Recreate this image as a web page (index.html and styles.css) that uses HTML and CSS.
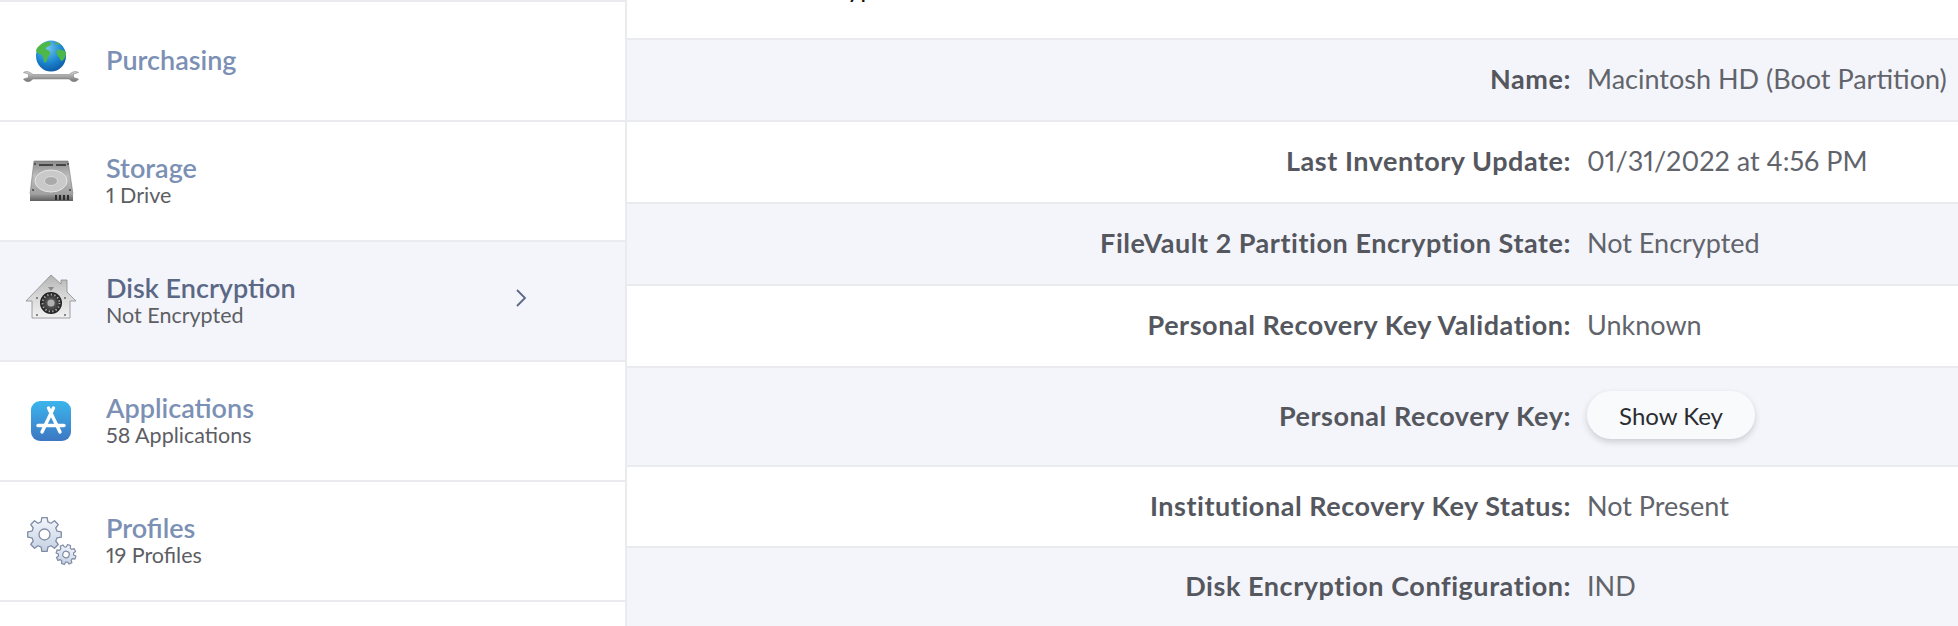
FILE: index.html
```html
<!DOCTYPE html>
<html lang="en">
<head>
    <meta charset="utf-8">
    <title>Disk Encryption</title>
    <link rel="stylesheet" href="styles.css">
</head>
<body>
    <div class="sidebar">
        <div class="item">
            <svg class="item-icon" viewBox="0 0 64 64">
                <defs>
                    <radialGradient id="sea" cx="0.4" cy="0.25" r="0.85">
                        <stop offset="0" stop-color="#6fc3ee"/>
                        <stop offset="0.55" stop-color="#1c86cf"/>
                        <stop offset="1" stop-color="#0c4f9c"/>
                    </radialGradient>
                    <linearGradient id="steel" x1="0" y1="0" x2="0" y2="1">
                        <stop offset="0" stop-color="#d9d9d9"/>
                        <stop offset="0.5" stop-color="#a3a3a3"/>
                        <stop offset="1" stop-color="#777"/>
                    </linearGradient>
                </defs>
                <ellipse cx="32" cy="27" rx="15" ry="15.5" fill="url(#sea)"/>
                <path d="M20 17c3-3 8-5 11-4 2 1 1 3-1 4-2 0-2 2-4 2 1 2 4 2 5 4s-1 3-2 5c-1 3-2 6-3 6-2-2-1-6-3-8-2-1-5-2-6-4 0-2 1-3 3-5z" fill="#4db848"/>
                <path d="M38 21c3-1 6 0 9 2 0 3-1 7-4 9-2 0-2-3-3-4-2-1-3-5-2-7z" fill="#4db848"/>
                <path d="M36 14c2-1 4 0 5 1-1 1-4 1-5-1z" fill="#5cb04a"/>
                <path d="M14 45.500H50C52 44 53 43 56 42.500C57.500 42.500 59 43 59.500 43.500L54.500 45V48.500L59.500 50C58.500 52 56 53 53.500 52.500C52 52 51 50.500 50 50H14C13 50.500 12 52 10.500 52.500C8 53 5.500 52 4.500 50L9.500 48.500V45L4.500 43.500C5 43 6.500 42.500 8 42.500C11 43 12 44 14 45.500Z" fill="url(#steel)" stroke="#777" stroke-width="0.5"/>
            </svg>
            <div class="item-text">
                <div class="item-title">Purchasing</div>
            </div>
        </div>
        <div class="item">
            <svg class="item-icon" viewBox="0 0 64 64">
                <defs>
                    <linearGradient id="drive" x1="0" y1="0" x2="0" y2="1">
                        <stop offset="0" stop-color="#8b8b8b"/>
                        <stop offset="0.45" stop-color="#bdbdbd"/>
                        <stop offset="1" stop-color="#a0a0a0"/>
                    </linearGradient>
                    <linearGradient id="driveFront" x1="0" y1="0" x2="0" y2="1">
                        <stop offset="0" stop-color="#a8a8a8"/>
                        <stop offset="1" stop-color="#5e5e5e"/>
                    </linearGradient>
                </defs>
                <path d="M15 12h34l5 33H11z" fill="url(#drive)" stroke="#777" stroke-width="0.6"/>
                <path d="M11 44h43v8H11z" fill="url(#driveFront)"/>
                <ellipse cx="32" cy="32" rx="16" ry="11" fill="#c9c9c9" stroke="#e6e6e6"/>
                <ellipse cx="32" cy="32" rx="6.5" ry="4.5" fill="#aaa" stroke="#dcdcdc"/>
                <path d="M20 15h14v2H20zM37 15h10v2H37z" fill="#444"/>
                <path d="M40 46h2v5h-2zM44 46h2v5h-2zM48 46h2v5h-2zM36 46h2v5h-2z" fill="#2c2c2c"/>
                <circle cx="16" cy="15" r="1" fill="#444"/>
                <circle cx="49" cy="15" r="1" fill="#444"/>
                <circle cx="14" cy="41" r="1" fill="#444"/>
                <circle cx="51" cy="41" r="1" fill="#444"/>
            </svg>
            <div class="item-text">
                <div class="item-title">Storage</div>
                <div class="item-sub">1 Drive</div>
            </div>
        </div>
        <div class="item item-active">
            <svg class="item-icon" viewBox="0 0 64 64">
                <defs>
                    <linearGradient id="roof" x1="0" y1="0" x2="0" y2="1">
                        <stop offset="0" stop-color="#b4b4b4"/>
                        <stop offset="0.5" stop-color="#d8d8d8"/>
                        <stop offset="1" stop-color="#f1f1f1"/>
                    </linearGradient>
                    <radialGradient id="dial" cx="0.5" cy="0.5" r="0.5">
                        <stop offset="0" stop-color="#a5a5a5"/>
                        <stop offset="0.35" stop-color="#555"/>
                        <stop offset="1" stop-color="#1f1f1f"/>
                    </radialGradient>
                </defs>
                <path d="M32 6l10 9v-4h6v12l9 9h-6v17H13V32H7z" fill="url(#roof)" stroke="#8a8a8a" stroke-width="0.8" stroke-linejoin="round"/>
                <path d="M29 18h6l-3 4z" fill="#888"/>
                <circle cx="32" cy="34" r="11" fill="url(#dial)"/>
                <circle cx="32" cy="34" r="8.500" fill="none" stroke="#b5b5b5" stroke-width="1.8" stroke-dasharray="1.2 2.4"/>
                <circle cx="32" cy="34" r="3.600" fill="#b0b0b0"/>
                <circle cx="18" cy="29" r="1" fill="#666"/>
                <circle cx="46" cy="29" r="1" fill="#666"/>
                <circle cx="18" cy="46" r="1" fill="#666"/>
                <circle cx="46" cy="46" r="1" fill="#666"/>
            </svg>
            <div class="item-text">
                <div class="item-title">Disk Encryption</div>
                <div class="item-sub">Not Encrypted</div>
            </div>
            <svg class="chevron" viewBox="0 0 12 20">
                <path d="M2 2l8 8-8 8" fill="none" stroke="#5b6885" stroke-width="1.8"/>
            </svg>
        </div>
        <div class="item">
            <svg class="item-icon" viewBox="0 0 64 64">
                <defs>
                    <linearGradient id="appstore" x1="0" y1="0" x2="0" y2="1">
                        <stop offset="0" stop-color="#3bb5ec"/>
                        <stop offset="1" stop-color="#3d77c2"/>
                    </linearGradient>
                </defs>
                <rect x="12" y="12" width="40" height="40" rx="9" fill="url(#appstore)"/>
                <path d="M29.500 19L41 43M34.500 19L23 43" fill="none" stroke="#fff" stroke-width="3.400" stroke-linecap="round"/>
                <path d="M19 36.500h26" fill="none" stroke="#fff" stroke-width="3.400" stroke-linecap="round"/>
            </svg>
            <div class="item-text">
                <div class="item-title">Applications</div>
                <div class="item-sub">58 Applications</div>
            </div>
        </div>
        <div class="item">
            <svg class="item-icon" viewBox="0 0 64 64">
                <defs>
                    <linearGradient id="gearFill" x1="0" y1="0" x2="0" y2="1">
                        <stop offset="0" stop-color="#f3f6fb"/>
                        <stop offset="1" stop-color="#c4d0e3"/>
                    </linearGradient>
                    <path id="gear" d="M12.56-3.360L16.790-2.660V2.660L12.560 3.360L11.260 6.500L13.750 9.990L9.990 13.750L6.500 11.260L3.360 12.560L2.660 16.790H-2.660L-3.360 12.560L-6.500 11.260L-9.990 13.750L-13.750 9.990L-11.260 6.500L-12.560 3.360L-16.790 2.660V-2.660L-12.560-3.360L-11.260-6.500L-13.750-9.990L-9.990-13.750L-6.500-11.260L-3.360-12.560L-2.660-16.790H2.660L3.360-12.560L6.500-11.260L9.990-13.750L13.750-9.990L11.260-6.500Z"/>
                </defs>
                <g transform="translate(25.500 25.500)" fill="url(#gearFill)" stroke="#7f8ca6" stroke-width="1.300" stroke-linejoin="round">
                    <use href="#gear"/>
                    <circle r="5.500" fill="#fff"/>
                </g>
                <g transform="translate(47 45.500) rotate(18) scale(0.59)" fill="url(#gearFill)" stroke="#7f8ca6" stroke-width="2" stroke-linejoin="round">
                    <use href="#gear"/>
                    <circle r="5.500" fill="#fff"/>
                </g>
            </svg>
            <div class="item-text">
                <div class="item-title">Profiles</div>
                <div class="item-sub">19 Profiles</div>
            </div>
        </div>
        <div class="item item-end"></div>
    </div>
    <div class="details">
        <div class="details-top">
            <div class="details-heading">Disk Encryption</div>
        </div>
        <div class="row row-alt">
            <div class="row-label">Name:</div>
            <div class="row-value">Macintosh HD (Boot Partition)</div>
        </div>
        <div class="row">
            <div class="row-label">Last Inventory Update:</div>
            <div class="row-value">01/31/2022 at 4:56 PM</div>
        </div>
        <div class="row row-alt">
            <div class="row-label">FileVault 2 Partition Encryption State:</div>
            <div class="row-value">Not Encrypted</div>
        </div>
        <div class="row">
            <div class="row-label">Personal Recovery Key Validation:</div>
            <div class="row-value">Unknown</div>
        </div>
        <div class="row row-alt row-tall">
            <div class="row-label">Personal Recovery Key:</div>
            <div class="row-value"><button class="show-key">Show Key</button></div>
        </div>
        <div class="row row-short">
            <div class="row-label">Institutional Recovery Key Status:</div>
            <div class="row-value">Not Present</div>
        </div>
        <div class="row row-alt row-end">
            <div class="row-label">Disk Encryption Configuration:</div>
            <div class="row-value">IND</div>
        </div>
    </div>
</body>
</html>
```

FILE: styles.css
```css
body {
    margin: 0;
    height: 100vh;
    display: flex;
    overflow: hidden;
    background-color: white;
    font-family: Lato, "Open Sans", sans-serif;
    font-variant-numeric: proportional-nums;
}

/* Left list */
.sidebar {
    width: 627px;
    flex-shrink: 0;
    box-sizing: border-box;
    border-right: 2px solid #e9ebef;
}
.item {
    height: 120px;
    box-sizing: border-box;
    border-top: 2px solid #e9ebef;
    display: flex;
    align-items: center;
    padding-left: 19px;
}
.item-end {
    height: 26px;
}
.item-active {
    background-color: #f3f5fa;
}
.item-icon {
    width: 64px;
    height: 64px;
    flex-shrink: 0;
    margin-right: 23px;
}
.item-text {
    width: 409px;
    flex-shrink: 0;
    padding-bottom: 2px;
}
.item-title {
    font-size: 27px;
    line-height: 30px;
    font-weight: 600;
    color: #7b90b4;
}
.item-active .item-title {
    color: #5b6885;
}
.item-sub {
    font-size: 21.500px;
    line-height: 24px;
    color: #5d5e64;
}
.chevron {
    width: 12px;
    height: 20px;
    margin-bottom: 6px;
}

/* Right table */
.details {
    flex: 1;
}
.details-top {
    height: 38px;
    overflow: hidden;
}
.details-heading {
    margin-top: -30px;
    padding-left: 112px;
    font-size: 26px;
    line-height: 34px;
    color: #111;
}
.row {
    height: 82px;
    box-sizing: border-box;
    border-top: 2px solid #e9ebef;
    padding-bottom: 3px;
    display: grid;
    grid-template-columns: 944px 1fr;
    column-gap: 16px;
    align-items: center;
    font-size: 27px;
}
.row-alt {
    background-color: #f4f5fa;
}
.row-tall {
    height: 99px;
}
.row-short {
    height: 81px;
}
.row-end {
    height: 80px;
}
.row-label {
    text-align: right;
    font-weight: 700;
    letter-spacing: 0.55px;
    color: #55575f;
}
.row-value {
    color: #62646c;
    white-space: nowrap;
}
.show-key {
    width: 168px;
    height: 48px;
    border: none;
    border-radius: 24px;
    background-color: #f9fafc;
    box-shadow: 0 3px 6px rgba(60, 64, 80, 0.22);
    font-family: inherit;
    font-size: 24px;
    color: #2b2c30;
}
```
